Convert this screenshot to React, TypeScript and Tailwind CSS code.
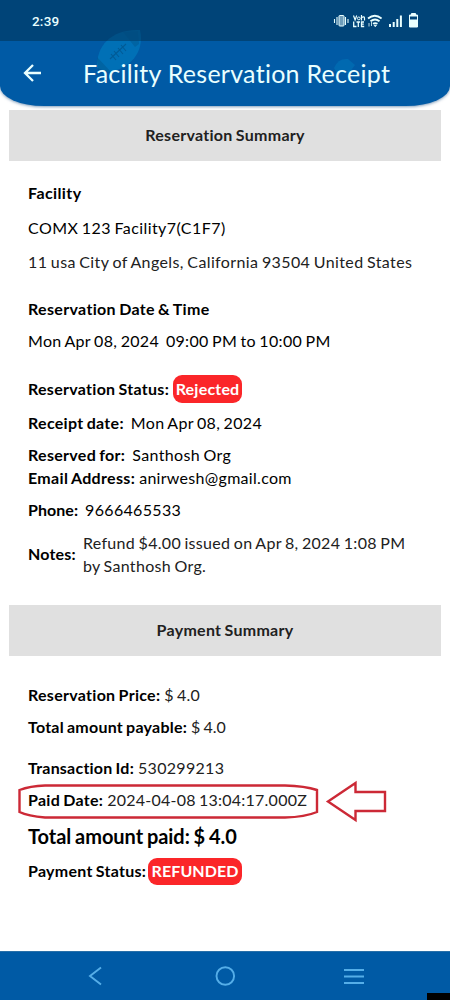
import type { ReactNode } from "react";

type LinhaProps = {
  rotulo: string;
  valor?: string;
  className?: string;
  rotuloClass?: string;
  valorClass?: string;
  children?: ReactNode;
};

function Linha({
  rotulo,
  valor,
  className = "",
  rotuloClass = "tracking-[0.28px]",
  valorClass = "",
  children,
}: LinhaProps) {
  return (
    <div className={`flex h-6 items-center whitespace-pre ${className}`}>
      <span className={`font-bold ${rotuloClass}`}>{rotulo}</span>
      {valor && <span className={valorClass}>{valor}</span>}
      {children}
    </div>
  );
}

function Titulo({ children }: { children: ReactNode }) {
  return (
    <h2 className="mx-[9px] flex h-[51px] items-center justify-center bg-[#e0e0e0] pb-px text-[16px] font-bold tracking-[0.28px] text-[#212121]">
      {children}
    </h2>
  );
}

function Etiqueta({ children, className = "" }: { children: ReactNode; className?: string }) {
  return (
    <span className={`flex items-center justify-center rounded-[9px] bg-[#fb2629] font-bold text-white ${className}`}>
      {children}
    </span>
  );
}

function BarraStatus() {
  return (
    <div className="flex h-[41px] items-center justify-between bg-[#004478] pr-[31px] pl-8 text-[#e9ffff]">
      <span className="pt-px font-[Roboto,sans-serif] text-[13.5px] font-medium tracking-[0.2px]">2:39</span>
      <svg width="86" height="18" viewBox="333 12 86 18" fill="none" stroke="currentColor">
        <path d="M334.5 19v4M337 17v8M345.500 17v8M348 19v4" strokeWidth="1.100" />
        <rect x="339" y="15.500" width="5" height="10.500" rx="0.800" fill="#6f9dba" strokeWidth="1" />
        <path d="M353.500 15.500l1.600 4.500 1.600-4.500M361.500 15v5.500M361.500 17.500q3-1.500 3 .5v2.500" strokeWidth="1.200" />
        <circle cx="358.800" cy="18.400" r="1.400" strokeWidth="1" />
        <path d="M353.700 21.500v5h2.800M356.500 22h3.500M358.300 22v5M364 22h-2.500v4.500h2.700M361.500 24.200h2.300" strokeWidth="1.300" />
        <path d="M368 18.500q6.800-5.500 13.600 0M370.500 21.300q4.500-3.500 9 0M373 23.800q2.200-1.500 4.500 0" strokeWidth="1.800" />
        <path d="M374 25.200h2.500l-1.250 1.500zM369 23v3.500M371.500 22v4" fill="currentColor" strokeWidth="0.800" />
        <path d="M390 24v3M393.700 22v5M397.300 19v8M400.900 15.500v11.500" strokeWidth="2" />
        <path d="M411.500 13.500h4v1.500h2v12h-8v-12h2z" fill="currentColor" strokeWidth="1" />
        <path d="M410 16.500h7v3h-7z" fill="#004478" stroke="none" />
      </svg>
    </div>
  );
}

// bola de futebol americano do fundo do cabeçalho
function Bola() {
  return (
    <svg className="absolute top-[26px] left-[92px]" width="54" height="46" viewBox="92 26 54 46" fill="none">
      <path d="M97 68C96 45 112 29 140 30C145 52 130 69 108 72Z" fill="#0090cc" opacity="0.420" />
      <path d="M123 32l12 15 4-3-1-13zM97 57l14 15-13-1z" fill="#004c80" opacity="0.350" />
      <path d="M110 59l16-15M111 54l5 6M114 51l5 6M118 48l5 6M121 45l5 6" stroke="#004c80" strokeWidth="1.100" opacity="0.600" />
      <path d="M92 26h54v15H92z" fill="#004478" opacity="0.600" />
    </svg>
  );
}

function Cabecalho() {
  return (
    <header className="relative h-[106px] overflow-hidden rounded-b-[44px_20px] bg-[#005aa5] shadow-[0_1px_3px_rgba(0,60,120,0.5)]">
      <BarraStatus />
      <Bola />
      <svg className="absolute top-[57px] left-[334px]" width="22" height="16" viewBox="0 0 22 16">
        <path d="M0 11Q4 1 14 2L21 8 15 16H3z" fill="#0080c0" opacity="0.400" />
      </svg>
      <div className="relative flex h-[65px] items-center pl-[23px] text-[#e9ffff]">
        <svg className="-mt-px" width="19" height="20" viewBox="0 0 19 20" fill="none" stroke="currentColor" strokeWidth="2.300">
          <path d="M18 10H2M10 2L2 10l8 8" />
        </svg>
        <h1 className="-mt-[2px] ml-[41px] text-[25px] tracking-[0.27px] whitespace-nowrap">Facility Reservation Receipt</h1>
      </div>
    </header>
  );
}

function Navegacao() {
  return (
    <nav className="relative mt-auto h-[49px] border-t border-[#286fa8] bg-[#005aa5]">
      <svg width="450" height="48" viewBox="0 952 450 48" fill="none" stroke="#55aee8" strokeWidth="1.900">
        <path d="M101 967.500L90 976l11 8.500" />
        <circle cx="225.300" cy="976" r="8.800" />
        <path d="M344 970h20M344 976.500h20M344 983h20" />
      </svg>
      <div className="absolute right-0 bottom-0 h-[7px] w-[23px] bg-black" />
    </nav>
  );
}

export default function App() {
  return (
    <div className="flex h-[1000px] w-[450px] flex-col overflow-hidden bg-white font-[Lato,sans-serif] text-[16px] leading-6 text-black">
      <Cabecalho />
      <main className="pt-1 [word-spacing:-1px]">
        <Titulo>Reservation Summary</Titulo>
        <section className="pt-5 pl-7">
          <Linha rotulo="Facility" rotuloClass="tracking-[0.4px]" />
          <p className="mt-[11px] tracking-[0.43px]">COMX 123 Facility7(C1F7)</p>
          <p className="mt-[10px] tracking-[0.39px] text-[#212121]">11 usa City of Angels, California 93504 United States</p>
          <Linha className="mt-[23px]" rotulo="Reservation Date & Time" rotuloClass="tracking-[0.33px]" />
          <p className="mt-2 tracking-[0.32px] whitespace-pre">Mon Apr 08, 2024  09:00 PM to 10:00 PM</p>
          <Linha className="mt-6" rotulo="Reservation Status:" rotuloClass="tracking-[0.28px]">
            <Etiqueta className="ml-[4px] h-7 w-[69px] tracking-[0.2px]">Rejected</Etiqueta>
          </Linha>
          <Linha className="mt-[10px]" rotulo="Receipt date:" rotuloClass="tracking-[0.3px]" valor="Mon Apr 08, 2024" valorClass="ml-[7px] tracking-[0.33px]" />
          <Linha className="mt-2" rotulo="Reserved for:" rotuloClass="tracking-[0.3px]" valor="Santhosh Org" valorClass="ml-[7px] tracking-[0.35px]" />
          <Linha className="-mt-px" rotulo="Email Address:" rotuloClass="tracking-[0.33px]" valor="anirwesh@gmail.com" valorClass="ml-1 tracking-[0.3px]" />
          <Linha className="mt-2" rotulo="Phone:" rotuloClass="tracking-[0.05px]" valor="9666465533" valorClass="ml-[7px] tracking-[0.32px]" />
          <div className="mt-[9px] flex items-center">
            <span className="font-bold tracking-[0.2px]">Notes:</span>
            <p className="ml-[7px] leading-[23px] tracking-[0.32px] text-[#212121]">
              Refund $4.00 issued on Apr 8, 2024 1:08 PM
              <br />
              by Santhosh Org.
            </p>
          </div>
        </section>
        <div className="mt-7">
          <Titulo>Payment Summary</Titulo>
        </div>
        <section className="pt-[27px] pl-7">
          <Linha rotulo="Reservation Price:" valor="$ 4.0" valorClass="ml-1 tracking-[0.2px] text-[#212121]" />
          <Linha className="mt-2" rotulo="Total amount payable:" rotuloClass="tracking-[0.23px]" valor="$ 4.0" valorClass="ml-1 text-[#212121]" />
          <Linha className="mt-[17px]" rotulo="Transaction Id:" rotuloClass="tracking-[0.22px]" valor="530299213" valorClass="ml-1 tracking-[0.3px] text-[#212121]" />
          <Linha className="relative mt-2" rotulo="Paid Date:" valor="2024-04-08 13:04:17.000Z" valorClass="ml-1 tracking-[0.24px] text-[#212121]">
            {/* destaque desenhado à mão sobre a data */}
            <svg className="absolute -top-[8px] -left-[12px]" width="372" height="44" viewBox="16 780 372 44" fill="none" stroke="#cc2936" strokeWidth="2.400">
              <path d="M19.500 790Q30 786 45 785.500H285Q305 786 317 790V812Q305 817 285 817.500H45Q28 816 19.500 812Z" />
              <path d="M328 801.500L355.500 783v9H385v19H355.500v9z" />
            </svg>
          </Linha>
          <Linha className="mt-3 text-[20px]" rotulo="Total amount paid: $ 4.0" rotuloClass="tracking-[-0.04px]" />
          <Linha className="mt-[11px]" rotulo="Payment Status:" rotuloClass="tracking-[0.26px]">
            <Etiqueta className="ml-[2px] h-[27px] w-[94px] tracking-[0.1px]">REFUNDED</Etiqueta>
          </Linha>
        </section>
      </main>
      <Navegacao />
    </div>
  );
}
